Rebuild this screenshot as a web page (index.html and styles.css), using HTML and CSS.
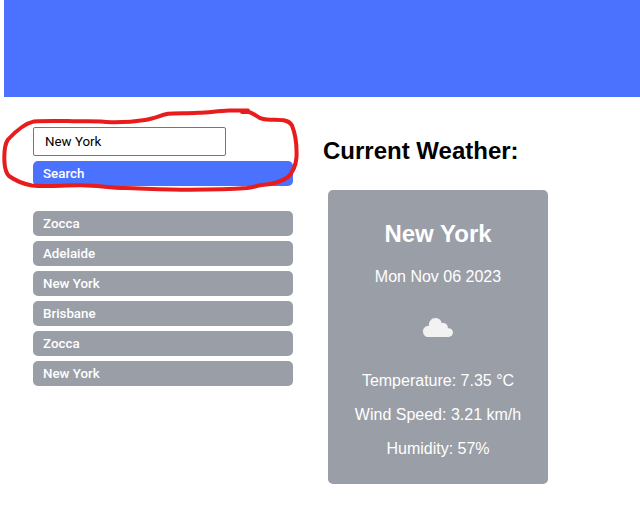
FILE: index.html
```html
<!DOCTYPE html>
<html lang="en">
<head>
<meta charset="utf-8">
<title>Weather</title>
<link rel="stylesheet" href="styles.css">
</head>
<body>
<header class="banner"></header>
<main class="layout">
  <aside class="sidebar">
    <form class="search">
      <input class="search-input" type="text" value="New York">
      <button class="btn btn-primary" type="button">Search</button>
    </form>
    <div class="history">
      <button class="btn">Zocca</button>
      <button class="btn">Adelaide</button>
      <button class="btn">New York</button>
      <button class="btn">Brisbane</button>
      <button class="btn">Zocca</button>
      <button class="btn">New York</button>
    </div>
  </aside>
  <section class="current">
    <h2 class="title">Current Weather:</h2>
    <article class="card">
      <h2 class="city">New York</h2>
      <p>Mon Nov 06 2023</p>
      <svg class="icon" viewBox="0 0 50 50" width="50" height="50">
        <path fill="#f2f2f2" d="M15.5 35C12.300 35 10 32.500 10 29.400C10 26.200 12.300 23.900 15.900 23.700C15.500 19.500 18.600 16 22.600 16C25.900 16 28.300 18.300 28.700 21.300C32 20.300 35.200 22.600 34.800 26.200C37.900 25.800 40 27.800 40 30.600C40 33.200 38 35 35.400 35Z"/>
      </svg>
      <p>Temperature: 7.35 °C</p>
      <p>Wind Speed: 3.21 km/h</p>
      <p>Humidity: 57%</p>
    </article>
  </section>
</main>
<svg class="annotation" viewBox="0 0 640 506" width="640" height="506">
  <path d="M248 110.500H229C217 111 210 112.300 198 112.800C186 113.500 176 113 168 113.800C160 115.500 154 118.500 145 120C133 122 123 122.500 111 122.300C98 120.500 87 121.300 73 121.200C58 121 46 120.700 34 121.400C24 123.500 16 131 8 139.500C4 145 4 154 4.500 163C5 169 6 173 9 176C16 181 23 184 32 185.500C47 187 65 185 81 185.300C98 185.500 108 187.500 125 188C145 188.500 165 189.700 190 189.700C215 189.500 232 189 247 188C254 187 257 185.500 264 184.800C276 184 283 180.500 288 177C293 172 296 164 296.500 157C297 144 295 133 292 125.500C289 120 283 120 274 119.800C267 119.500 263 120 259 117.500C255 115 251 112 248 112H242"/>
</svg>
</body>
</html>
```
FILE: styles.css
```css
* { box-sizing: border-box; }
body {
  margin: 0;
  padding-left: 4px;
  background: #fff;
  color: #000;
  font: 16px "Liberation Sans", Arial, sans-serif;
  overflow: hidden;
}
.banner { height: 97px; background: #4a72ff; }
.layout { display: flex; gap: 30px; padding: 30px 0 0 29px; }
.sidebar { width: 260px; }
.search { display: flex; flex-direction: column; gap: 5px; margin: 0 0 25px; }
.search-input {
  width: 193px;
  height: 29px;
  margin: 0;
  padding: 0 11px 1px;
  border: 1px solid #767676;
  border-radius: 2px;
  background: #fff;
  color: #000;
  font: 13.333px Roboto, sans-serif;
}
.history { display: flex; flex-direction: column; gap: 5px; }
.btn {
  width: 100%;
  height: 25px;
  margin: 0;
  padding: 0 10px;
  border: 0;
  border-radius: 5px;
  background: #9a9ea7;
  color: #fff;
  font: 500 13.333px Roboto, sans-serif;
  text-align: left;
}
.btn-primary { background: #4a72ff; }
.title { margin: 10px 0 26px; font-size: 24px; line-height: 27px; }
.card {
  width: 220px;
  height: 294px;
  margin-left: 5px;
  padding-top: 30px;
  border-radius: 5px;
  background: #9a9ea7;
  color: #fff;
  text-align: center;
}
.city { margin: 0 0 21px; font-size: 24px; line-height: 27px; }
.card p { margin: 0 0 16px; line-height: 18px; }
.icon { display: block; margin: 0 auto 20px; }
.annotation {
  position: absolute;
  left: 0;
  top: 0;
  pointer-events: none;
  fill: none;
  stroke: #e81c1c;
  stroke-width: 4;
  stroke-linecap: round;
  stroke-linejoin: round;
}
```
